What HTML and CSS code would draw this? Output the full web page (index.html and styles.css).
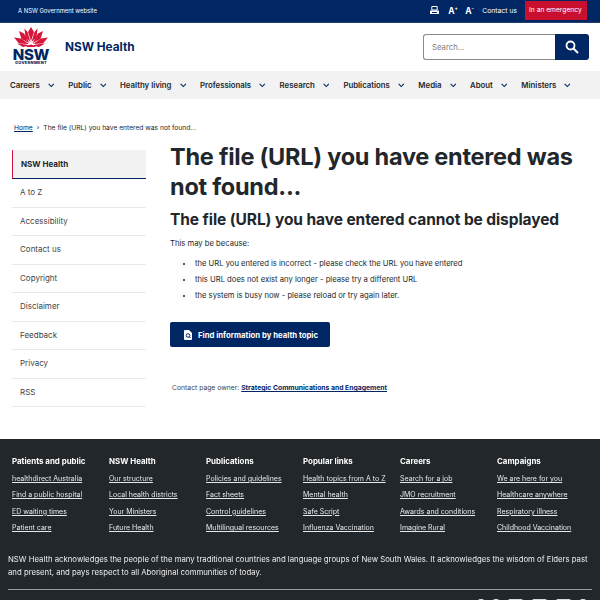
FILE: index.html
```html
<!DOCTYPE html>
<html lang="en">
<head>
<meta charset="utf-8">
<title>NSW Health</title>
<link rel="stylesheet" href="styles.css">
</head>
<body>
<div class="topbar">
  <span class="gov">A NSW Government website</span>
  <div class="tools">
    <svg class="ti" width="9" height="9" viewBox="0 0 9 9"><path d="M1.800 0.500h5.400v3.500H1.800z" fill="none" stroke="#fff"/><path d="M0 4.500h9V8H0z" fill="#fff"/><path d="M2 6.500h5" stroke="#002664"/></svg>
    <span class="fs">A<sup>+</sup></span>
    <span class="fs">A<sup>-</sup></span>
    <span class="contact">Contact us</span>
    <span class="emerg">In an emergency</span>
  </div>
</div>
<header class="head">
  <div class="brand">
    <div class="logo">
      <svg width="34" height="20" viewBox="0 0 34 20"><g fill="#d7153a"><path d="M17 0l3 5-3 9-3-9z"/><path d="M10.500 1.500l3 3.500 3 10-5-4.500z"/><path d="M23.500 1.500l-3 3.500-3 10 5-4.500z"/><path d="M5 4l5 2.500 5.500 9.500-8-4z"/><path d="M29 4l-5 2.500-5.500 9.500 8-4z"/><path d="M0 10.500l7 1 8 5.500-10-.5z"/><path d="M34 10.500l-7 1-8 5.500 10-.5z"/><path d="M3 16.500l9 1 3 1-6 1.500z"/><path d="M31 16.500l-9 1-3 1 6 1.500z"/><path d="M12 20q5-5 10 0z"/></g></svg>
      <span class="nsw">NSW</span>
      <span class="govt">GOVERNMENT</span>
    </div>
    <span class="site">NSW Health</span>
  </div>
  <div class="search">
    <span class="field">Search...</span>
    <span class="sbtn"><svg width="14" height="14" viewBox="0 0 14 14"><circle cx="5.500" cy="5.500" r="4" fill="none" stroke="#fff" stroke-width="1.800"/><path d="M8.500 8.500l4.500 4.500" stroke="#fff" stroke-width="2"/></svg></span>
  </div>
</header>
<nav class="nav">
  <span class="ni">Careers<svg class="chev" viewBox="0 0 7 5"><path d="M0.700 0.800L3.500 3.600 6.300 0.800"/></svg></span>
  <span class="ni">Public<svg class="chev" viewBox="0 0 7 5"><path d="M0.700 0.800L3.500 3.600 6.300 0.800"/></svg></span>
  <span class="ni">Healthy living<svg class="chev" viewBox="0 0 7 5"><path d="M0.700 0.800L3.500 3.600 6.300 0.800"/></svg></span>
  <span class="ni">Professionals<svg class="chev" viewBox="0 0 7 5"><path d="M0.700 0.800L3.500 3.600 6.300 0.800"/></svg></span>
  <span class="ni">Research<svg class="chev" viewBox="0 0 7 5"><path d="M0.700 0.800L3.500 3.600 6.300 0.800"/></svg></span>
  <span class="ni">Publications<svg class="chev" viewBox="0 0 7 5"><path d="M0.700 0.800L3.500 3.600 6.300 0.800"/></svg></span>
  <span class="ni">Media<svg class="chev" viewBox="0 0 7 5"><path d="M0.700 0.800L3.500 3.600 6.300 0.800"/></svg></span>
  <span class="ni">About<svg class="chev" viewBox="0 0 7 5"><path d="M0.700 0.800L3.500 3.600 6.300 0.800"/></svg></span>
  <span class="ni">Ministers<svg class="chev" viewBox="0 0 7 5"><path d="M0.700 0.800L3.500 3.600 6.300 0.800"/></svg></span>
</nav>
<div class="crumbs"><a class="home">Home</a><span class="sep">›</span><span>The file (URL) you have entered was not found...</span></div>
<div class="main">
  <aside class="side">
    <div class="si active">NSW Health</div>
    <div class="si">A to Z</div>
    <div class="si">Accessibility</div>
    <div class="si">Contact us</div>
    <div class="si">Copyright</div>
    <div class="si">Disclaimer</div>
    <div class="si">Feedback</div>
    <div class="si">Privacy</div>
    <div class="si">RSS</div>
  </aside>
  <main class="content">
    <h1>The file (URL) you have entered was not found...</h1>
    <h2>The file (URL) you have entered cannot be displayed</h2>
    <p class="lead">This may be because:</p>
    <ul>
      <li>the URL you entered is incorrect - please check the URL you have entered</li>
      <li>this URL does not exist any longer - please try a different URL</li>
      <li>the system is busy now - please reload or try again later.</li>
    </ul>
    <span class="cta"><svg width="8" height="10" viewBox="0 0 8 10"><path d="M0 1a1 1 0 0 1 1-1h4l3 3v6a1 1 0 0 1-1 1H1a1 1 0 0 1-1-1z" fill="#fff"/><circle cx="4" cy="5.500" r="1.800" fill="none" stroke="#002664"/><path d="M5.300 6.800l1.200 1.200" stroke="#002664"/></svg>Find information by health topic</span>
    <p class="owner">Contact page owner: <a>Strategic Communications and Engagement</a></p>
  </main>
</div>
<footer class="foot">
  <div class="cols">
    <div class="col"><h3>Patients and public</h3><a>healthdirect Australia</a><a>Find a public hospital</a><a>ED waiting times</a><a>Patient care</a></div>
    <div class="col"><h3>NSW Health</h3><a>Our structure</a><a>Local health districts</a><a>Your Ministers</a><a>Future Health</a></div>
    <div class="col"><h3>Publications</h3><a>Policies and guidelines</a><a>Fact sheets</a><a>Control guidelines</a><a>Multilingual resources</a></div>
    <div class="col"><h3>Popular links</h3><a>Health topics from A to Z</a><a>Mental health</a><a>Safe Script</a><a>Influenza Vaccination</a></div>
    <div class="col"><h3>Careers</h3><a>Search for a job</a><a>JMO recruitment</a><a>Awards and conditions</a><a>Imagine Rural</a></div>
    <div class="col"><h3>Campaigns</h3><a>We are here for you</a><a>Healthcare anywhere</a><a>Respiratory illness</a><a>Childhood Vaccination</a></div>
  </div>
  <p class="ack">NSW Health acknowledges the people of the many traditional countries and language groups of New South Wales. It acknowledges the wisdom of Elders past and present, and pays respect to all Aboriginal communities of today.</p>
  <div class="rule"></div>
  <div class="social"><i class="s1"></i><i class="s1"></i><i class="s2"></i><i class="s2"></i><i class="s2"></i><i class="s1"></i></div>
</footer>
</body>
</html>
```
FILE: styles.css
```css
* { box-sizing: border-box; }
html, body { margin: 0; height: 600px; overflow: hidden; }
body { font-family: "Inter", "Liberation Sans", sans-serif; color: #22272b; background: #fff; font-size: 8px; }
.topbar { height: 23px; background: #002664; color: #fff; display: flex; justify-content: space-between; align-items: center; padding: 0 13px 1px 18px; border-bottom: 1px solid #22406f; font-size: 5.900px; }
.tools { display: flex; align-items: center; font-size: 6.800px; }
.ti { margin-right: 9px; }
.fs { font-weight: 700; font-size: 8.500px; width: 17px; }
.fs sup { font-size: 5px; line-height: 0; }
.contact { margin: 0 8px 0 0; }
.emerg { background: #c8102e; padding: 0 4px; height: 19px; line-height: 19px; font-size: 6.700px; width: 62px; white-space: nowrap; }
.head { height: 48px; display: flex; justify-content: space-between; align-items: center; padding: 0 11px 0 14px; }
.brand { display: flex; align-items: center; gap: 17px; }
.logo { width: 34px; margin-bottom: 2px; display: flex; flex-direction: column; align-items: center; color: #002664; font-weight: 800; }
.logo svg { display: block; }
.nsw { font-size: 15px; letter-spacing: -0.300px; margin-top: 1px; line-height: 13px; }
.govt { font-size: 4px; letter-spacing: 0.300px; line-height: 4px; white-space: nowrap; }
.site { font-size: 11.800px; font-weight: 700; color: #002664; }
.search { display: flex; width: 166px; height: 26px; }
.field { flex: 1; border: 1px solid #8a8a8a; border-right: 0; border-radius: 3px 0 0 3px; color: #808080; padding: 0 8px; line-height: 24px; font-size: 7.800px; }
.sbtn { width: 34px; background: #002664; border-radius: 0 3px 3px 0; display: flex; align-items: center; justify-content: center; }
.nav { height: 28px; background: #f2f2f2; display: flex; align-items: center; padding: 0 0 0 10px; font-weight: 600; font-size: 7.800px; color: #22272b; white-space: nowrap; }
.ni { display: flex; align-items: center; margin-right: 14px; }
.chev { width: 6.500px; height: 5px; margin-left: 8px; fill: none; stroke: #002664; stroke-width: 1.200; }
.crumbs { padding: 24px 0 0 14px; height: 43px; font-size: 6.700px; display: flex; align-items: baseline; color: #22272b; line-height: 10px; }
.home { color: #002664; text-decoration: underline; }
.sep { margin: 0 4px; }
.main { display: flex; height: 297px; padding-left: 12px; }
.side { width: 134px; margin: 8px 24px 0 0; }
.si { height: 28.500px; line-height: 27.500px; padding-left: 8px; border-bottom: 1px solid #e9e9e9; color: #444; font-size: 8px; }
.si.active { height: 29px; background: #f2f2f2; border-left: 1px solid #d7153a; border-bottom: 1px solid #002664; font-weight: 700; color: #22272b; line-height: 28px; }
.content { width: 410px; }
h1 { margin: 0; font-size: 23.500px; letter-spacing: -0.250px; line-height: 30px; font-weight: 700; }
h2 { margin: 8px 0 0; font-size: 15.500px; letter-spacing: -0.080px; line-height: 20px; font-weight: 700; }
.lead { margin: 8px 0 0; font-size: 7.650px; line-height: 12px; }
ul { margin: 6px 0 0; padding: 0 0 0 25px; list-style: none; }
li { font-size: 7.650px; line-height: 16px; position: relative; }
li::before { content: ""; position: absolute; left: -12.500px; top: 7px; width: 2px; height: 2px; background: #22272b; border-radius: 50%; }
.cta { display: flex; width: 160px; height: 25px; margin-top: 18px; align-items: center; gap: 6px; padding-left: 14px; background: #002664; border-radius: 2px; color: #fff; font-weight: 700; font-size: 7.750px; }
.owner { margin: 36px 0 0 2px; font-size: 6.800px; line-height: 10px; color: #444; }
.owner a { color: #002664; font-weight: 700; text-decoration: underline; }
.foot { background: #22272b; height: 161px; padding: 16px 8px 0; color: #fff; }
.cols { display: flex; padding-left: 4px; will-change: transform; }
.col { flex: none; width: 97px; display: flex; flex-direction: column; font-size: 7px; }
.col h3 { margin: 0 0 4px; font-size: 7.900px; line-height: 12px; font-weight: 700; }
.col a { line-height: 16.400px; text-decoration: underline; color: #e8e8e8; }
.ack { margin: 16px 0 0; font-size: 7.780px; line-height: 12.500px; color: #eee; will-change: transform; }
.rule { height: 1px; background: #9a9a9a; margin-top: 11px; }
.social { display: flex; justify-content: flex-end; gap: 9px; margin-top: 9px; padding-right: 6px; }
.social i { display: block; height: 10px; background: #d8d8d8; border-radius: 2px; }
.s1 { width: 6px; }
.s2 { width: 15px; }
```
